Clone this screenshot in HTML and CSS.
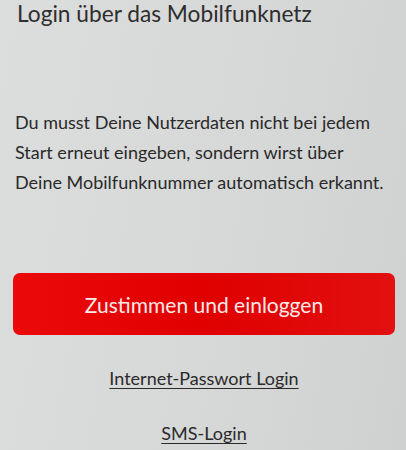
FILE: index.html
```html
<!DOCTYPE html>
<html lang="de">
<head>
<meta charset="utf-8">
<link rel="stylesheet" href="styles.css">
</head>
<body>
<main class="screen">
  <h1 class="title">Login über das Mobilfunknetz</h1>
  <p class="intro">Du musst Deine Nutzerdaten nicht bei jedem<br>Start erneut eingeben, sondern wirst über<br>Deine Mobilfunknummer automatisch erkannt.</p>
  <button class="primary">Zustimmen und einloggen</button>
  <a class="link link-first" href="#">Internet-Passwort Login</a>
  <a class="link" href="#">SMS-Login</a>
</main>
</body>
</html>
```
FILE: styles.css
```css
html, body {
  margin: 0;
  padding: 0;
  height: 100%;
}
body {
  background: linear-gradient(100deg, #dcdddd 0%, #d6d7d7 60%, #cfd0d0 100%);
  font-family: Lato, "Noto Sans", sans-serif;
  color: #303030;
}
.screen {
  display: flex;
  flex-direction: column;
  padding: 0 11px 0 13px;
}
.title {
  margin: 0 0 0 4px;
  font-size: 22.7px;
  line-height: 28px;
  font-weight: 400;
  color: #2e2e2e;
}
.intro {
  margin: 79px 0 0 2px;
  font-size: 18px;
  line-height: 30px;
  color: #2a2a2a;
}
.primary {
  margin-top: 76px;
  height: 62px;
  border: 0;
  border-radius: 7px;
  background: linear-gradient(90deg, #ea0a0a 0%, #e00000 50%, #e21010 100%);
  color: #fbeaea;
  font-family: inherit;
  font-size: 21px;
}
.link {
  align-self: center;
  margin-top: 31px;
  font-size: 18px;
  line-height: 24px;
  color: #2a2a2a;
  text-decoration: underline;
  text-underline-offset: 3px;
}
```
